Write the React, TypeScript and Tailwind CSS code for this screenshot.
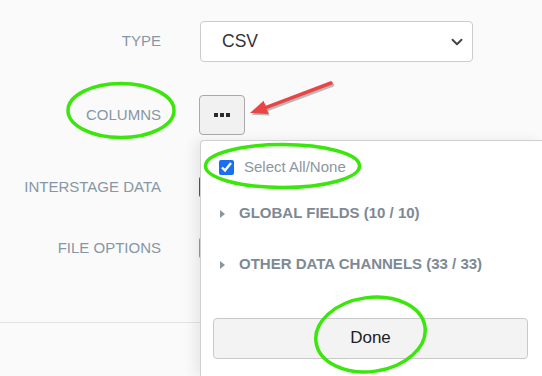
import { ChevronDown } from 'lucide-react';

const labelClass =
  'w-[161px] shrink-0 text-right text-[15px] uppercase text-[#8796a5]';

function Annotations() {
  return (
    <svg
      className="pointer-events-none absolute inset-0"
      width="542"
      height="376"
      viewBox="0 0 542 376"
    >
      <g fill="none" stroke="#3be60c" strokeWidth="3.5">
        <ellipse cx="121" cy="110.5" rx="53" ry="27" />
        <ellipse cx="282.5" cy="166" rx="77" ry="21.5" />
        <ellipse cx="370.5" cy="334.5" rx="55" ry="37" transform="rotate(-8 370.5 334.5)" />
      </g>
      <g opacity="0.25" transform="translate(1.5 2)">
        <line x1="331" y1="83" x2="266" y2="107.4" stroke="#000" strokeWidth="3.5" strokeLinecap="round" />
        <polygon points="250,113 268.1,113.5 263.9,101.3" fill="#000" />
      </g>
      <line x1="331" y1="83" x2="265" y2="107.8" stroke="#ea4545" strokeWidth="3.5" strokeLinecap="round" />
      <polygon points="250,113 268.6,114 263.6,100.8" fill="#ea4545" />
    </svg>
  );
}

function ColumnsPanel() {
  return (
    <div className="absolute left-[200px] top-[140px] right-0 bottom-0 rounded-tl-[4px] border-l border-t border-[#cfcfcf] bg-white shadow-[-6px_0_12px_rgba(0,0,0,0.07)]">
      <label className="ml-[18px] mt-[15px] flex items-center gap-[10px]">
        <input
          type="checkbox"
          defaultChecked
          className="h-[15px] w-[15px] accent-[#1a6ff0]"
        />
        <span className="text-[15px] text-[#8c96a0]">Select All/None</span>
      </label>
      <div className="mt-[26px] flex flex-col gap-[33px] pl-[19px]">
        {['GLOBAL FIELDS (10 / 10)', 'OTHER DATA CHANNELS (33 / 33)'].map((g) => (
          <div key={g} className="flex h-[18px] items-center gap-[14px]">
            <span className="h-0 w-0 border-y-[4.5px] border-l-[5px] border-y-transparent border-l-[#8a96a0]" />
            <span className="text-[15px] font-bold text-[#7d8994]">{g}</span>
          </div>
        ))}
      </div>
      <button className="ml-[12px] mt-[44px] flex h-[41px] w-[315px] items-center justify-center rounded-[4px] border border-[#c9c9c9] bg-[#f3f3f3] text-[17px] text-[#222]">
        Done
      </button>
    </div>
  );
}

export default function App() {
  return (
    <div
      className="relative h-[376px] w-[542px] overflow-hidden bg-[#fafafa]"
      style={{ fontFamily: '"Liberation Sans", Arial, sans-serif' }}
    >
      <div className="flex flex-col pt-[21px]">
        <div className="flex items-center gap-[39px]">
          <span className={labelClass}>Type</span>
          <div className="flex h-[41px] w-[273px] items-center justify-between rounded-[4px] border border-[#cccccc] bg-white pl-[21px] pr-[6px]">
            <span className="text-[17.5px] text-[#333]">CSV</span>
            <ChevronDown className="h-[18px] w-[18px] text-[#444]" strokeWidth={2.6} />
          </div>
        </div>
        <div className="mt-[33px] flex items-center gap-[38px]">
          <span className={labelClass}>Columns</span>
          <button className="flex h-[40px] w-[46px] items-center justify-center rounded-[4px] border border-[#a9a9a9] bg-[#f1f1f1]">
            <span className="flex gap-[2px]">
              <span className="h-[4px] w-[4px] bg-[#2b2b2b]" />
              <span className="h-[4px] w-[4px] bg-[#2b2b2b]" />
              <span className="h-[4px] w-[4px] bg-[#2b2b2b]" />
            </span>
          </button>
        </div>
        <div className="mt-[32px] flex h-[40px] items-center gap-[38px]">
          <span className={labelClass}>Interstage Data</span>
          <div className="h-[22px] w-[40px] rounded-[3px] border border-[#555]" />
        </div>
        <div className="mt-[21px] flex h-[40px] items-center gap-[38px]">
          <span className={labelClass}>File Options</span>
          <div className="h-[22px] w-[40px] rounded-[3px] border border-[#999]" />
        </div>
        <div className="mt-[54px] border-t border-[#e3e3e3]" />
      </div>
      <ColumnsPanel />
      <Annotations />
    </div>
  );
}
